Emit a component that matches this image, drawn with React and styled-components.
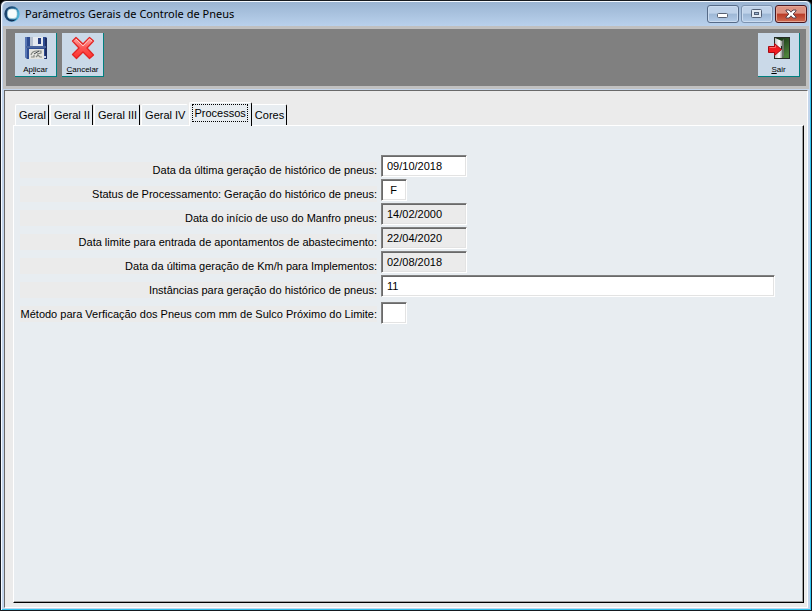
import React from "react";
import styled, { createGlobalStyle, css } from "styled-components";

const Global = createGlobalStyle`
  *, *::before, *::after { box-sizing: border-box; }
  body { margin: 0; background: #000; font-family: "Liberation Sans", Arial, sans-serif; font-size: 11px; color: #000; }
  button, input { font: inherit; color: inherit; }
`;

const Window = styled.div`
  min-height: 100vh;
  display: flex;
  flex-direction: column;
  border: 1px solid #15191f;
  border-radius: 6px 6px 0 0;
  background: #c3d5ec;
  box-shadow: inset 1px 1px 0 #f4f9ff, inset -1px -1px 0 #2ec3ee;
  padding: 1px 2px 2px;
`;

const TitleBar = styled.header`
  height: 24px;
  display: flex;
  align-items: center;
  gap: 5px;
  padding: 0 0 0 1px;
  background: linear-gradient(#9ab4d2, #b9d1ec);
  border-radius: 5px 5px 0 0;
`;

const Title = styled.h1`
  margin: 0;
  flex: 1;
  font: 11px/24px "Noto Sans", "Segoe UI", sans-serif;
  white-space: nowrap;
`;

const Controls = styled.div`
  display: flex;
  gap: 2px;
  padding-right: 2px;
`;

const ControlButton = styled.button`
  width: 32px;
  height: 18px;
  padding: 0;
  display: grid;
  place-items: center;
  border: 1px solid ${(p) => (p.$close ? "#4a1720" : p.$dim ? "#7d93b0" : "#566b88")};
  border-radius: 3px;
  box-shadow: inset 0 0 0 1px ${(p) => (p.$close ? "#e5a594" : "#cbdcf0")};
  background: ${(p) =>
    p.$close
      ? "linear-gradient(#dc9282 0 45%, #b93a26 50%, #cf6a50)"
      : "linear-gradient(#bfd2e9 0 45%, #9db7d5 50%, #b4cce8)"};
`;

const Toolbar = styled.div`
  display: flex;
  gap: 5px;
  align-items: flex-start;
  height: 63px;
  padding: 4px 6px 0 9px;
  background: #808080;
  border: 3px solid #c0c0c0;
`;

const Spacer = styled.div`
  flex: 1;
`;

const ToolButton = styled.button`
  width: 42px;
  height: 44px;
  padding: 3px 0 0;
  display: flex;
  flex-direction: column;
  align-items: center;
  gap: 4px;
  border: 0 solid #008080;
  border-width: 0 1px 1px 0;
  background: #cad9e8;
  font-size: 8px;
  line-height: 11px;
  svg { display: block; }
`;

const Body = styled.main`
  flex: 1;
  display: flex;
  flex-direction: column;
  margin: 1px 1px 0;
  padding: 11px 3px 4px 8px;
  background: #ebebeb;
  border: 1px solid #696969;
  border-right-color: #fff;
  border-bottom-color: #fff;
`;

const Tabs = styled.div`
  display: flex;
  align-items: flex-end;
  gap: 1px;
  padding-left: 2px;
`;

const Tab = styled.button`
  position: relative;
  height: 21px;
  padding: 0 2px 0 3px;
  border: solid;
  border-width: 1px 1px 0;
  border-color: #fff #000 #fff #fff;
  border-radius: 2px 2px 0 0;
  background: #e8edf1;
  line-height: 20px;
  white-space: nowrap;
  ${(p) =>
    p.$beforeActive &&
    css`
      border-right-color: transparent;
    `}
  ${(p) =>
    p.$active &&
    css`
      height: 24px;
      margin-bottom: -1px;
      padding: 0 3px 3px 2px;
      margin-right: -2px;
      z-index: 1;
    `}
`;

const Focus = styled.span`
  display: block;
  border: 1px dotted #000;
  line-height: 16px;
  padding: 0 1px;
`;

const Panel = styled.section`
  flex: 1;
  padding: 28px 28px 24px 6px;
  background: #e8edf1;
  border: solid 1px;
  border-color: #fff #000 #000 #fff;
  box-shadow: inset -1px -1px 0 #a0a0a0;
`;

const Row = styled.div`
  display: grid;
  grid-template: 24px / 357px minmax(0, 1fr);
  column-gap: 4px;
`;

const Label = styled.label`
  align-self: end;
  height: 16px;
  background: #ebebeb;
  line-height: 16px;
  text-align: right;
  white-space: nowrap;
`;

const Field = styled.input`
  width: ${(p) => p.$width};
  height: 22px;
  margin-top: ${(p) => (p.$low ? "4px" : "1px")};
  padding: ${(p) => (p.$center ? "0 5px 0 4px" : "0 3px 0 5px")};
  border: 1px solid;
  border-color: #808080 #fff #fff #808080;
  border-radius: 0;
  outline: 0;
  box-shadow: inset 1px 1px 0 #696969, inset -1px -1px 0 #e3e3e3;
  background: ${(p) => (p.readOnly ? "#ebebeb" : "#fff")};
  text-align: ${(p) => (p.$center ? "center" : "left")};
`;

const AppIcon = () => (
  <svg width="16" height="16" viewBox="0 0 16 16" aria-hidden="true">
    <defs>
      <linearGradient id="ring" x1="0" y1="0" x2="1" y2="0.3">
        <stop offset="0" stopColor="#17375f" />
        <stop offset=".6" stopColor="#215a88" />
        <stop offset="1" stopColor="#4db4d8" />
      </linearGradient>
    </defs>
    <circle cx="8" cy="8" r="7.7" fill="url(#ring)" />
    <path d="M2.5 11.5Q7 16.5 13 12.5Q10 15.6 7 15.2Q4 14.5 2.5 11.5Z" fill="#0a2448" />
    <rect x="3.5" y="3" width="9.5" height="9.5" rx="3.6" fill="#f6fcfc" stroke="#a7d3de" strokeWidth=".7" />
  </svg>
);

const SaveIcon = () => (
  <svg width="24" height="24" viewBox="0 0 24 24" aria-hidden="true">
    <path d="M1 1H22L23 2V23H3L1 21Z" fill="#2d4b91" />
    <path d="M1 1H3V22L1 21Z" fill="#5977b4" />
    <path d="M21 2H23V23H21Z" fill="#1d2d62" />
    <rect x="6" y="1" width="13" height="9" fill="#e4e9f0" />
    <rect x="6" y="1" width="3" height="9" fill="#b6c1d1" />
    <rect x="14" y="2" width="3" height="6" fill="#263d80" />
    <rect x="2" y="10" width="20" height="2" fill="#49649d" />
    <rect x="5" y="13" width="15" height="10" fill="#e4e4df" />
    <path d="M7 19Q8 15 13 15H17V17L13 18M7 21H10V19M12 21L14 19L16 21H18" stroke="#858983" fill="none" strokeWidth="1.2" />
    <path d="M10 18L15 15" stroke="#42484b" />
    <rect x="20" y="20" width="2" height="2" fill="#cbd5ee" />
  </svg>
);

const CancelIcon = () => (
  <svg width="24" height="24" viewBox="0 0 24 24" aria-hidden="true">
    <defs>
      <linearGradient id="cross" x1="0" y1="0" x2="0" y2="1">
        <stop offset="0" stopColor="#ffaaa6" />
        <stop offset=".5" stopColor="#fc5553" />
        <stop offset="1" stopColor="#ff302d" />
      </linearGradient>
    </defs>
    <path d="M5 1.5L12 8L18.5 1.5L22.5 5L16 12L22.5 19L18.5 22.5L12 16L5.5 22.5L1.5 18.5L8 12L1.5 5Z" fill="url(#cross)" stroke="#e22524" strokeWidth="1.3" strokeLinejoin="round" />
    <path d="M5 3L12 10L18.5 3L21 5" stroke="#ffc5c1" fill="none" />
  </svg>
);

const ExitIcon = () => (
  <svg width="24" height="24" viewBox="0 0 24 24" aria-hidden="true">
    <defs>
      <linearGradient id="outside" x1="0" y1="0" x2=".5" y2="1">
        <stop offset="0" stopColor="#102b12" />
        <stop offset="1" stopColor="#4d823b" />
      </linearGradient>
      <linearGradient id="door">
        <stop offset="0" stopColor="#bfc2c2" />
        <stop offset=".6" stopColor="#fff" />
        <stop offset="1" stopColor="#9da19d" />
      </linearGradient>
    </defs>
    <rect x="7.5" y="1.5" width="15" height="21" fill="url(#outside)" stroke="#252c25" />
    <path d="M8 2L15 5V22L8 22Z" fill="url(#door)" />
    <path d="M15 5L17 3V20L15 22Z" fill="#687168" />
    <rect x="14" y="10" width="1" height="3" fill="#222" />
    <path d="M1.5 10.5H7.5V7.5L14.5 13.5L7.5 19.5V16.5H1.5Z" fill="#f11b20" stroke="#a50b13" />
    <path d="M2.5 11.5H8.5V9.5" fill="none" stroke="#ff6c68" />
  </svg>
);

const MinimizeIcon = () => (
  <svg width="12" height="12" viewBox="0 0 12 12" aria-hidden="true">
    <rect x=".5" y="5.5" width="10" height="4" rx="1" fill="#fff" stroke="#586171" />
  </svg>
);

const MaximizeIcon = () => (
  <svg width="12" height="12" viewBox="0 0 12 12" aria-hidden="true">
    <rect x=".5" y="1.5" width="10" height="8" rx="1" fill="#e4ebf4" stroke="#536076" />
    <rect x="3.5" y="4.5" width="4" height="2" fill="#9bb4d1" stroke="#536076" />
  </svg>
);

const CloseIcon = () => (
  <svg width="12" height="12" viewBox="0 0 12 12" aria-hidden="true">
    <path d="M1 2H4L6 4.2L8 2H11V3L8.2 6L11 9V10H8L6 7.8L4 10H1V9L3.8 6L1 3Z" fill="#fff" stroke="#59424b" />
  </svg>
);

const tabs = ["Geral", "Geral II", "Geral III", "Geral IV", "Processos", "Cores"];

const fields = [
  { id: "hist", label: "Data da última geração de histórico de pneus:", value: "09/10/2018", width: "86px" },
  { id: "status", label: "Status de Processamento: Geração do histórico de pneus:", value: "F", width: "26px", center: true },
  { id: "inicio", label: "Data do início de uso do Manfro pneus:", value: "14/02/2000", width: "86px", readOnly: true },
  { id: "limite", label: "Data limite para entrada de apontamentos de abastecimento:", value: "22/04/2020", width: "86px", readOnly: true },
  { id: "km", label: "Data da última geração de Km/h para Implementos:", value: "02/08/2018", width: "86px", readOnly: true },
  { id: "inst", label: "Instâncias para geração do histórico de pneus:", value: "11", width: "100%" },
  { id: "metodo", label: "Método para Verficação dos Pneus com mm de Sulco Próximo do Limite:", value: "", width: "26px", low: true },
];

export default function App() {
  return (
    <>
      <Global />
      <Window>
        <TitleBar>
          <AppIcon />
          <Title>Parâmetros Gerais de Controle de Pneus</Title>
          <Controls>
            <ControlButton aria-label="Minimizar"><MinimizeIcon /></ControlButton>
            <ControlButton $dim aria-label="Maximizar"><MaximizeIcon /></ControlButton>
            <ControlButton $close aria-label="Fechar"><CloseIcon /></ControlButton>
          </Controls>
        </TitleBar>
        <Toolbar>
          <ToolButton><SaveIcon /><span>Ap<u>l</u>icar</span></ToolButton>
          <ToolButton><CancelIcon /><span><u>C</u>ancelar</span></ToolButton>
          <Spacer />
          <ToolButton><ExitIcon /><span><u>S</u>air</span></ToolButton>
        </Toolbar>
        <Body>
          <Tabs role="tablist">
            {tabs.map((name, i) => {
              const active = name === "Processos";
              return (
                <Tab key={name} role="tab" aria-selected={active} $active={active} $beforeActive={tabs[i + 1] === "Processos"}>
                  {active ? <Focus>{name}</Focus> : name}
                </Tab>
              );
            })}
          </Tabs>
          <Panel role="tabpanel">
            {fields.map((f) => (
              <Row key={f.id}>
                <Label htmlFor={f.id}>{f.label}</Label>
                <Field id={f.id} defaultValue={f.value} readOnly={f.readOnly} $width={f.width} $center={f.center} $low={f.low} />
              </Row>
            ))}
          </Panel>
        </Body>
      </Window>
    </>
  );
}
